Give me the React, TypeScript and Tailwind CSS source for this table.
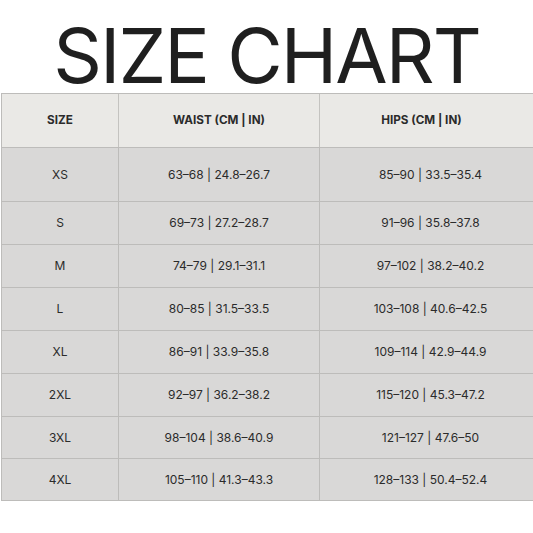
const rows = [
  { size: "XS", waist: "63–68 | 24.8–26.7", hips: "85–90 | 33.5–35.4", h: "h-[54px]" },
  { size: "S", waist: "69–73 | 27.2–28.7", hips: "91–96 | 35.8–37.8", h: "h-[43px]" },
  { size: "M", waist: "74–79 | 29.1–31.1", hips: "97–102 | 38.2–40.2", h: "h-[43px]" },
  { size: "L", waist: "80–85 | 31.5–33.5", hips: "103–108 | 40.6–42.5", h: "h-[43px]" },
  { size: "XL", waist: "86–91 | 33.9–35.8", hips: "109–114 | 42.9–44.9", h: "h-[43px]" },
  { size: "2XL", waist: "92–97 | 36.2–38.2", hips: "115–120 | 45.3–47.2", h: "h-[43px]" },
  { size: "3XL", waist: "98–104 | 38.6–40.9", hips: "121–127 | 47.6–50", h: "h-[42px]" },
  { size: "4XL", waist: "105–110 | 41.3–43.3", hips: "128–133 | 50.4–52.4", h: "h-[42px]" },
];

export default function App() {
  return (
    <div className="h-[533px] w-[533px] overflow-hidden bg-white font-['Inter',sans-serif]">
      {/* Title */}
      <h1 className="pt-[17px] text-center text-[76px] leading-[76px] font-normal tracking-[-2px] text-[#1f1f1f]">
        SIZE CHART
      </h1>

      {/* Table */}
      <div className="ml-px w-[540px] border-t border-l border-[#bdbcba] text-[#2b2b2b]">
        <div className="grid h-[54px] grid-cols-[117px_201px_1fr] border-b border-[#bdbcba] bg-[#eae9e6] text-[11.7px] font-bold">
          <div className="flex items-center justify-center border-r border-[#c4c3c0]">SIZE</div>
          <div className="flex items-center justify-center border-r border-[#c4c3c0]">WAIST (CM | IN)</div>
          <div className="flex items-center justify-center pr-[18px]">HIPS (CM | IN)</div>
        </div>
        {rows.map((r) => (
          <div
            key={r.size}
            className={`grid grid-cols-[117px_201px_1fr] border-b border-[#bdbcba] bg-[#d9d8d7] text-[12px] ${r.h}`}
          >
            <div className="flex items-center justify-center border-r border-[#bdbcba]">{r.size}</div>
            <div className="flex items-center justify-center border-r border-[#bdbcba]">{r.waist}</div>
            <div className="flex items-center justify-center">{r.hips}</div>
          </div>
        ))}
      </div>
    </div>
  );
}
